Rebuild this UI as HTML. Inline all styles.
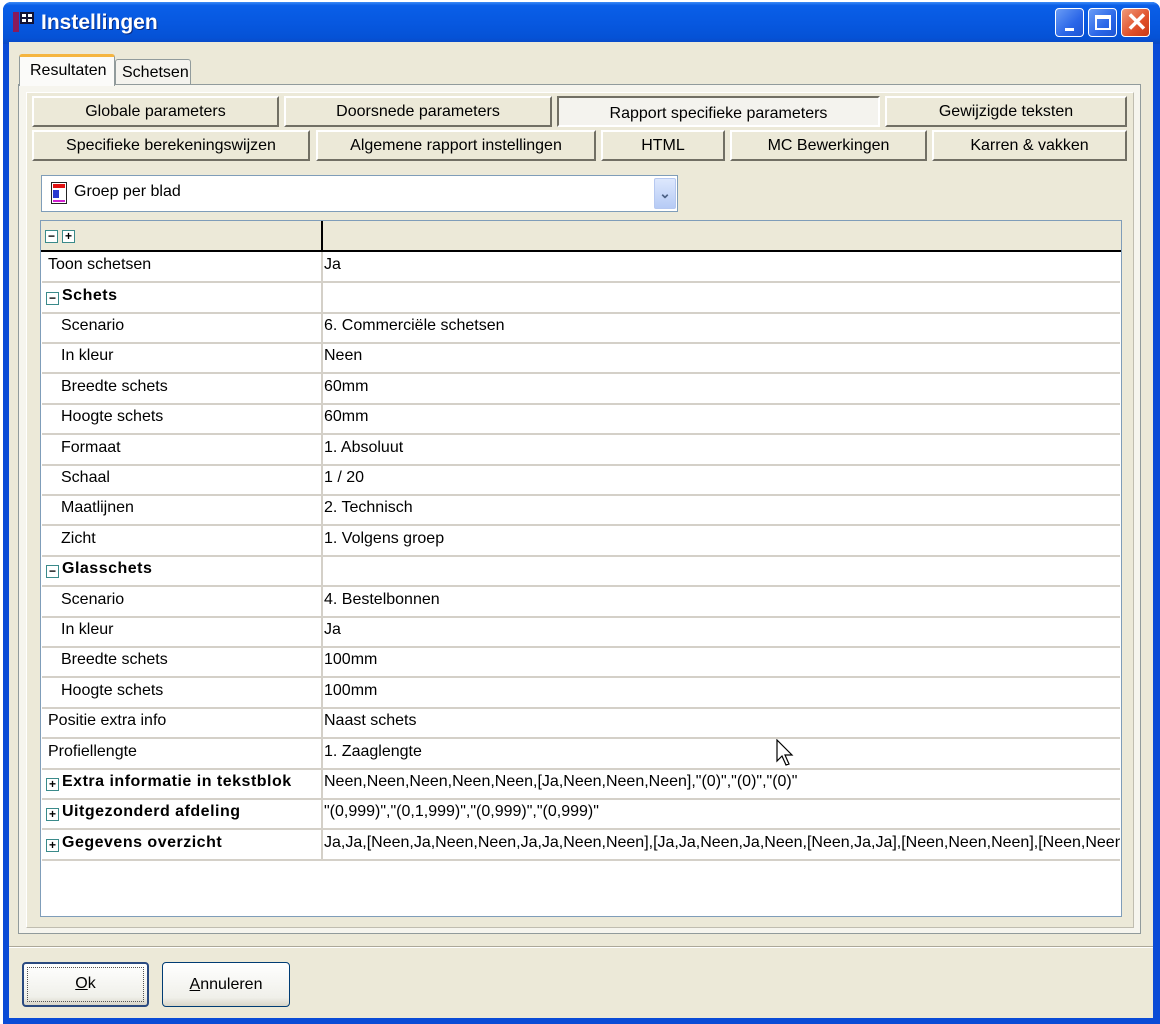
<!DOCTYPE html>
<html><head><meta charset="utf-8"><style>
*{margin:0;padding:0;box-sizing:border-box}
body{width:1160px;height:1024px;overflow:hidden;background:#fff;font-family:"Liberation Sans",Arial,sans-serif;font-size:16px;color:#000;position:relative}
.abs{position:absolute}
.win{left:3px;top:2px;width:1157px;height:1022px;background:#0a4bd6;border-radius:8px 8px 0 0}
.title{left:3px;top:2px;width:1157px;height:42px;border-radius:8px 8px 0 0;background:linear-gradient(#3d8cf7 0,#0a5fe8 8%,#0758e0 50%,#0552d6 85%,#0a48c4 100%)}
.client{left:9px;top:42px;width:1144px;height:976px;background:#ece9d8}
.ttext{left:41px;top:11px;color:#fff;font-size:21px;font-weight:bold;text-shadow:1px 1px 0 #0a2a80}
.tb{top:8px;width:29px;height:29px;border:1px solid #fff;border-radius:4px;background:linear-gradient(135deg,#6a9cf5,#2a66e8 60%,#1d55d4)}
.btn{position:absolute;height:31px;background:#ece9d8;border-top:2px solid #fff;border-left:2px solid #fff;border-right:2px solid #716f64;border-bottom:2px solid #716f64;text-align:center;line-height:27px;font-size:16px}
.row{position:absolute;left:42px;width:1078px;height:31px;border-bottom:2px solid #d4d0c8}
.lbl{position:absolute;left:6px;top:4px;white-space:nowrap}
.val{position:absolute;left:282px;top:4px;white-space:nowrap;width:796px;overflow:hidden}
.ind{left:19px}
.b{font-weight:bold;letter-spacing:0.5px;left:20px}
.box{position:absolute;left:4px;top:9px;width:13px;height:13px;border:1px solid #3a8a8a;background:#fff;font-size:12px;line-height:10px;text-align:center;font-weight:bold;color:#000}
</style></head><body>
<div class="abs win"></div>
<div class="abs title"></div>
<div class="abs" style="left:13px;top:12px;width:6px;height:20px;background:#8a1a5a"></div>
<div class="abs" style="left:20px;top:12px;width:14px;height:12px;background:#fff;border:2px solid #113"></div>
<div class="abs" style="left:26px;top:12px;width:2px;height:12px;background:#113"></div>
<div class="abs" style="left:20px;top:17px;width:14px;height:2px;background:#113"></div>
<div class="abs ttext">Instellingen</div>
<div class="abs tb" style="left:1055px"><div class="abs" style="left:9px;top:19px;width:9px;height:3px;background:#fff"></div></div>
<div class="abs tb" style="left:1088px"><div class="abs" style="left:6px;top:6px;width:16px;height:15px;border:2px solid #fff;border-top-width:4px"></div></div>
<div class="abs tb" style="left:1121px;background:linear-gradient(135deg,#f09a7a,#e0502a 60%,#c83a18)"><div class="abs" style="left:4px;top:0;color:#fff;font-size:26px;line-height:27px;font-weight:bold">✕</div></div>
<div class="abs client"></div>
<!-- tab panel -->
<div class="abs" style="left:18px;top:84px;width:1123px;height:850px;background:#f6f5ee;border:1px solid #919b9c"></div>
<div class="abs" style="left:26px;top:92px;width:1108px;height:836px;background:#ece9d8;border-left:1px solid #fff;border-top:1px solid #fff;border-right:1px solid #c0bdb0;border-bottom:1px solid #c0bdb0"></div>
<div class="abs" style="left:19px;top:54px;width:96px;height:32px;background:#fbfbf9;border:1px solid #919b9c;border-bottom:none;border-top:3px solid #f5b540;border-radius:3px 3px 0 0;padding:5px 0 0 10px">Resultaten</div>
<div class="abs" style="left:115px;top:59px;width:76px;height:25px;background:#f4f3ee;border:1px solid #919b9c;border-bottom:none;border-radius:3px 3px 0 0;padding:4px 0 0 6px">Schetsen</div>
<!-- buttons -->
<div class="btn" style="left:32px;top:96px;width:247px">Globale parameters</div>
<div class="btn" style="left:284px;top:96px;width:268px">Doorsnede parameters</div>
<div class="btn" style="left:557px;top:96px;width:323px;background:#f4f3ee;border-top-color:#716f64;border-left-color:#716f64;border-right-color:#fff;border-bottom-color:#fff;line-height:31px">Rapport specifieke parameters</div>
<div class="btn" style="left:885px;top:96px;width:242px">Gewijzigde teksten</div>
<div class="btn" style="left:32px;top:130px;width:278px">Specifieke berekeningswijzen</div>
<div class="btn" style="left:316px;top:130px;width:280px">Algemene rapport instellingen</div>
<div class="btn" style="left:601px;top:130px;width:124px">HTML</div>
<div class="btn" style="left:730px;top:130px;width:197px">MC Bewerkingen</div>
<div class="btn" style="left:932px;top:130px;width:195px">Karren &amp; vakken</div>
<!-- combo -->
<div class="abs" style="left:41px;top:175px;width:637px;height:37px;background:#fff;border:1px solid #7f9db9"></div>
<div class="abs" style="left:51px;top:182px;width:16px;height:22px;border:1px solid #222;background:#fff"><div class="abs" style="left:1px;top:1px;width:12px;height:4px;background:#e01010"></div><div class="abs" style="left:1px;top:7px;width:6px;height:8px;background:#2a3ad0"></div><div class="abs" style="left:1px;top:17px;width:12px;height:2px;background:#d020d0"></div></div>
<div class="abs" style="left:74px;top:183px">Groep per blad</div>
<div class="abs" style="left:654px;top:178px;width:22px;height:31px;background:linear-gradient(#dde8fd,#b6cbf5);border:1px solid #b6c8f0;border-radius:2px;color:#4d6185;text-align:center;line-height:29px;font-size:14px;font-weight:bold">⌄</div>
<!-- grid -->
<div class="abs" style="left:40px;top:220px;width:1082px;height:697px;background:#fff;border:1px solid #7f9db9"></div>
<div class="abs" style="left:41px;top:221px;width:1080px;height:31px;background:#ece9d8;border-bottom:2px solid #000"></div>
<div class="abs" style="left:321px;top:221px;width:2px;height:31px;background:#000"></div>
<div class="box" style="left:45px;top:230px">−</div><div class="box" style="left:62px;top:230px">+</div>
<div class="abs" style="left:321px;top:252px;width:2px;height:609px;background:#d4d0c8"></div>
<div class="row" style="top:252px"><span class="lbl">Toon schetsen</span><span class="val">Ja</span></div>
<div class="row" style="top:283px"><span class="box">−</span><span class="lbl b">Schets</span></div>
<div class="row" style="top:313px"><span class="lbl ind">Scenario</span><span class="val">6. Commerciële schetsen</span></div>
<div class="row" style="top:343px"><span class="lbl ind">In kleur</span><span class="val">Neen</span></div>
<div class="row" style="top:374px"><span class="lbl ind">Breedte schets</span><span class="val">60mm</span></div>
<div class="row" style="top:404px"><span class="lbl ind">Hoogte schets</span><span class="val">60mm</span></div>
<div class="row" style="top:435px"><span class="lbl ind">Formaat</span><span class="val">1. Absoluut</span></div>
<div class="row" style="top:465px"><span class="lbl ind">Schaal</span><span class="val">1 / 20</span></div>
<div class="row" style="top:495px"><span class="lbl ind">Maatlijnen</span><span class="val">2. Technisch</span></div>
<div class="row" style="top:526px"><span class="lbl ind">Zicht</span><span class="val">1. Volgens groep</span></div>
<div class="row" style="top:556px"><span class="box">−</span><span class="lbl b">Glasschets</span></div>
<div class="row" style="top:587px"><span class="lbl ind">Scenario</span><span class="val">4. Bestelbonnen</span></div>
<div class="row" style="top:617px"><span class="lbl ind">In kleur</span><span class="val">Ja</span></div>
<div class="row" style="top:647px"><span class="lbl ind">Breedte schets</span><span class="val">100mm</span></div>
<div class="row" style="top:678px"><span class="lbl ind">Hoogte schets</span><span class="val">100mm</span></div>
<div class="row" style="top:708px"><span class="lbl">Positie extra info</span><span class="val">Naast schets</span></div>
<div class="row" style="top:739px"><span class="lbl">Profiellengte</span><span class="val">1. Zaaglengte</span></div>
<div class="row" style="top:769px"><span class="box">+</span><span class="lbl b">Extra informatie in tekstblok</span><span class="val">Neen,Neen,Neen,Neen,Neen,[Ja,Neen,Neen,Neen],"(0)","(0)","(0)"</span></div>
<div class="row" style="top:799px"><span class="box">+</span><span class="lbl b">Uitgezonderd afdeling</span><span class="val">"(0,999)","(0,1,999)","(0,999)","(0,999)"</span></div>
<div class="row" style="top:830px"><span class="box">+</span><span class="lbl b">Gegevens overzicht</span><span class="val">Ja,Ja,[Neen,Ja,Neen,Neen,Ja,Ja,Neen,Neen],[Ja,Ja,Neen,Ja,Neen,[Neen,Ja,Ja],[Neen,Neen,Neen],[Neen,Neen,Neen]]</span></div>
<!-- cursor -->
<svg class="abs" style="left:776px;top:739px" width="20" height="30" viewBox="0 0 20 30"><path d="M1 1 L1 22 L6 17 L10 26 L13 25 L9 16 L16 16 Z" fill="#fff" stroke="#000" stroke-width="1.2"/></svg>
<!-- footer -->
<div class="abs" style="left:9px;top:946px;width:1144px;height:2px;border-top:1px solid #aca899;border-bottom:1px solid #fff"></div>
<div class="abs" style="left:22px;top:962px;width:127px;height:45px;border:2px solid #2a4a80;border-radius:4px;background:linear-gradient(#fff,#f0f0ea 80%,#d8d5c8);text-align:center;line-height:40px"><span style="text-decoration:underline">O</span>k<div class="abs" style="left:3px;top:3px;right:3px;bottom:3px;border:1px dotted #555"></div></div>
<div class="abs" style="left:162px;top:962px;width:128px;height:45px;border:1px solid #003c74;border-radius:4px;background:linear-gradient(#fff,#f0f0ea 80%,#d8d5c8);text-align:center;line-height:43px"><span style="text-decoration:underline">A</span>nnuleren</div>
</body></html>
